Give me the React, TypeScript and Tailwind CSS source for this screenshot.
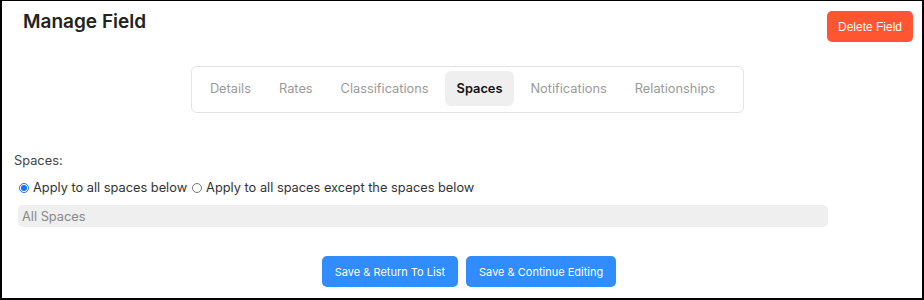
import React, { useState } from "react";

const tabs = ["Details", "Rates", "Classifications", "Spaces", "Notifications", "Relationships"];

export default function App() {
  const [active, setActive] = useState("Spaces");
  const [mode, setMode] = useState("all");

  return (
    <div className="w-[924px] h-[300px] bg-white border-l-2 border-r-2 border-b-2 border-t border-black font-['Inter',sans-serif] text-[#333] overflow-hidden">
      {/* header */}
      <div className="flex items-start justify-between pl-[21px] pr-[9px] pt-[9px]">
        <h1 className="text-[19px] font-semibold text-[#222] leading-6">Manage Field</h1>
        <button className="mt-[1px] h-[31px] px-[11px] rounded-[5px] bg-[#ff5530] text-white text-[12px] font-['Liberation_Sans',sans-serif]">
          Delete Field
        </button>
      </div>

      {/* tabs */}
      <div className="flex justify-center pl-[11px] mt-[24px]">
        <div className="flex gap-1 border border-[#e3e3e3] rounded-[6px] pl-[6px] pr-[16px] pt-[4px] pb-[6px]">
          {tabs.map((t) => (
            <button
              key={t}
              onClick={() => setActive(t)}
              className={
                t === active
                  ? "h-[35px] px-3 rounded-[6px] bg-[#efefef] text-[#111] font-semibold text-[12.8px]"
                  : "h-[35px] px-3 rounded-[6px] text-[#9a9a9a] text-[12.8px]"
              }
            >
              {t}
            </button>
          ))}
        </div>
      </div>

      {/* spaces */}
      <div className="pl-[12px] pr-[94px] mt-[38px] text-[12.8px]">
        <div className="text-[#444]">Spaces:</div>
        <div className="flex items-center mt-[8px] pl-[5px] text-[#333]">
          <label className="flex items-center gap-[4px]">
            <input
              type="radio"
              name="mode"
              checked={mode === "all"}
              onChange={() => setMode("all")}
              className="w-[10px] h-[10px] accent-[#1a73e8] m-0"
            />
            Apply to all spaces below
          </label>
          <label className="flex items-center gap-[4px] ml-[5px]">
            <input
              type="radio"
              name="mode"
              checked={mode === "except"}
              onChange={() => setMode("except")}
              className="w-[10px] h-[10px] accent-[#1a73e8] m-0"
            />
            Apply to all spaces except the spaces below
          </label>
        </div>
        <div className="ml-[4px] mt-[8px] h-[22px] rounded-[5px] bg-[#efefef] px-[4px] flex items-center text-[#888]">
          All Spaces
        </div>
      </div>

      {/* actions */}
      <div className="flex justify-center gap-2 pl-[14px] mt-[29px]">
        <button className="h-[31px] px-[13px] rounded-[5px] bg-[#318cfe] text-white text-[11px]">
          Save &amp; Return To List
        </button>
        <button className="h-[31px] px-[13px] rounded-[5px] bg-[#318cfe] text-white text-[11px]">
          Save &amp; Continue Editing
        </button>
      </div>
    </div>
  );
}
